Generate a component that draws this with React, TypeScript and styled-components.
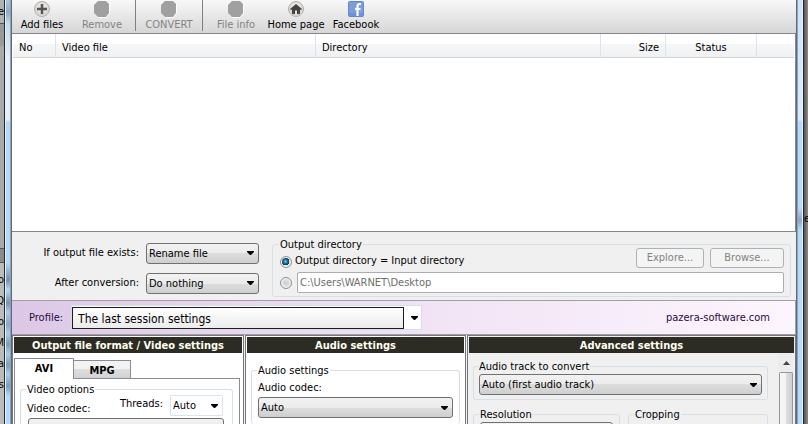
import React from "react";
import styled, { createGlobalStyle } from "styled-components";

const Global = createGlobalStyle`
  * { box-sizing: border-box; }
  body {
    margin: 0;
    overflow: hidden;
    background: #b4b4b4;
    color: #000;
    font: 11px/14px "DejaVu Sans Condensed", "Noto Sans", sans-serif;
  }
  button, input, select { font: inherit; color: inherit; margin: 0; border-radius: 0; }
`;

const Desktop = styled.div`
  display: grid;
  grid-template-columns: 4px 8px minmax(0, 1fr) 8px 4px;
  height: 100vh;
`;

const Backdrop = styled.div<{ $side: "left" | "right" }>`
  display: flex;
  flex-direction: column;
  overflow: hidden;
  align-items: ${(p) => (p.$side === "left" ? "flex-end" : "flex-start")};
  background: ${(p) =>
    p.$side === "left"
      ? "linear-gradient(#b2b2b2 0 23px, #555 23px 24px, #9a9a9a 24px 46px, #aaa 46px 248px, #555 248px 249px, #8a8a8a 249px 262px, #555 262px 263px, #bcbcbc 263px)"
      : "linear-gradient(90deg, #555, #8c8c8c)"};
`;

const Sliver = styled.span<{ $gap: number }>`
  flex: none;
  margin-top: ${(p) => p.$gap}px;
  white-space: nowrap;
`;

const Frame = styled.div<{ $side: "left" | "right" }>`
  border: solid #22272d;
  border-width: ${(p) => (p.$side === "left" ? "0 0 0 1px" : "0 1px 0 0")};
  box-shadow: inset ${(p) => (p.$side === "left" ? "-1px" : "1px")} 0 #5f6a75,
    inset ${(p) => (p.$side === "left" ? "-2px" : "2px")} 0 #93a3b3,
    inset ${(p) => (p.$side === "left" ? "1px" : "-1px")} 0 #e6f3fc;
  background: ${(p) =>
    p.$side === "left"
      ? "linear-gradient(#a9c5dd 0, #8cabc6 12px, #c5dbee 24px, #e4eff9 60px, #e4eff9 120px, #b5d8f8 122px, #b5d8f8 262px, #7893ac 280px, #b5d8f8 290px, #7893ac 303px, #a9cbe9 312px, #8aa9c4 324px, #a9cbe9 334px, #809cb6 344px, #a9cbe9 354px, #809cb6 365px, #a9cbe9 374px, #809cb6 386px, #b5d8f8 396px)"
      : "linear-gradient(#cbe3fb 0, #d9eafb 120px, #b5d8fb 122px, #b5d8fb 208px, #8aa5bf 220px, #b5d8fb 230px)"};
`;

const Window = styled.main`
  display: flex;
  flex-direction: column;
  min-width: 0;
  min-height: 0;
  overflow: hidden;
  background: #f0f0f0;
`;

const Toolbar = styled.nav`
  display: flex;
  flex: none;
  height: 34px;
  border-bottom: 1px solid #85858b;
  background: linear-gradient(#f8f8f8, #d6d6d6);
`;

const ToolButton = styled.button`
  display: flex;
  flex-direction: column;
  align-items: center;
  width: 60px;
  padding: 1px 0 0;
  border: 0;
  background: none;
  white-space: nowrap;
  &:disabled { color: #838383; }
  svg { display: block; flex: none; }
`;

const ToolDivider = styled.span`
  width: 1px;
  height: 31px;
  margin: 0 3px;
  background: #808080;
`;

const FileList = styled.section`
  flex: none;
  min-height: 198px;
  border-right: 1px solid #828790;
  border-bottom: 1px solid #828790;
  background: #fff;
  padding: 0 1px;
`;

const FileTable = styled.table`
  width: 100%;
  table-layout: fixed;
  border-collapse: separate;
  border-spacing: 0;
`;

const HeadCell = styled.th<{ $align?: string; $width?: number }>`
  width: ${(p) => (p.$width ? `${p.$width}px` : "auto")};
  height: 24px;
  padding: 4px 6px 0;
  border-right: 1px solid #e0e2e5;
  border-bottom: 1px solid #d5d5d5;
  background: linear-gradient(#fff 0 10px, #f6f7f9 10px, #f0f1f3);
  font-weight: normal;
  line-height: 15px;
  text-align: ${(p) => p.$align ?? "left"};
  &:last-child { border-right: 0; }
`;

const Options = styled.section`
  display: flex;
  flex: none;
  height: 68px;
  padding: 4px 5px 3px 0;
  gap: 13px;
`;

const OptionGrid = styled.div`
  display: grid;
  grid-template-columns: 127px 113px;
  grid-template-rows: 22px 22px;
  column-gap: 7px;
  row-gap: 8px;
  padding-top: 6px;
  align-items: center;
  & > label { text-align: right; }
`;

const Group = styled.fieldset`
  min-width: 0;
  margin: 0;
  padding: 0 6px;
  border: 1px solid #d5dfe5;
  border-radius: 3px;
`;

const Legend = styled.legend`
  margin-left: -1px;
  padding: 2px 1px 0;
  line-height: 14px;
`;

const DirectoryGroup = styled(Group)`
  flex: 1;
  padding: 0 6px 0 7px;
`;

const DirectoryRow = styled.div`
  display: flex;
  gap: 6px;
`;

const RadioRow = styled(DirectoryRow)`
  align-items: flex-end;
  height: 20px;
  margin-top: -4px;
`;

const PathRow = styled(DirectoryRow)`
  align-items: center;
  margin-top: 4px;
  gap: 5px;
`;

const Radio = styled.input`
  appearance: none;
  flex: none;
  width: 12px;
  height: 12px;
  margin: 0;
  border: 1px solid #8e8f8f;
  border-radius: 50%;
  background: radial-gradient(circle, #c8ccd0, #f8f8f8);
  box-shadow: inset 0 0 0 1px #f4f4f4;
  &:checked {
    background: radial-gradient(circle at 45% 45%, #6ed0f5 0, #1c6c98 2px, #0b2f4c 4px, #dfe5e8 4px);
  }
`;

const RadioLabel = styled.label`
  flex: 1;
  margin-left: -3px;
`;

const PushButton = styled.button<{ $width: number }>`
  width: ${(p) => p.$width}px;
  height: 20px;
  padding: 0;
  border: 1px solid #adb2b5;
  border-radius: 3px;
  background: #f4f4f4;
  color: #838383;
`;

const PathInput = styled.input`
  flex: 1;
  min-width: 0;
  height: 21px;
  padding: 0 2px;
  border: 1px solid #abadb3;
  border-radius: 2px;
  background: #fff;
  color: #6d6d6d;
`;

const SelectBox = styled.div<{ $flat?: boolean }>`
  display: grid;
  grid-template-columns: minmax(0, 1fr) 11px;
  align-items: center;
  height: 21px;
  border: 1px solid ${(p) => (p.$flat ? "#dce3ea" : "#707070")};
  border-radius: ${(p) => (p.$flat ? 1 : 3)}px;
  background: ${(p) => (p.$flat ? "#fff" : "linear-gradient(#f2f2f2 0, #ebebeb 50%, #dddddd 50%, #cfcfcf)")};
  svg { grid-area: 1 / 2; pointer-events: none; }
`;

const Select = styled.select`
  grid-area: 1 / 1 / 2 / 3;
  appearance: none;
  width: 100%;
  height: 19px;
  padding: 1px 11px 0 2px;
  border: 0;
  background: transparent;
`;

const ProfileBar = styled.section`
  display: flex;
  flex: none;
  align-items: center;
  height: 35px;
  padding: 0 25px 0 17px;
  border: solid #a0a0a0;
  border-width: 1px 1px 1px 0;
  background: linear-gradient(90deg, #dcc8e6, #f0e2f4 50%, #fdf5fe);
  color: #2b0a3d;
`;

const ProfileCombo = styled.div`
  display: grid;
  grid-template-columns: minmax(0, 1fr) 17px;
  align-items: center;
  width: 351px;
  height: 25px;
  margin: 0 auto 0 8px;
  border: 1px solid #dcdce4;
  background: #fff;
  svg { justify-self: end; margin-right: 3px; }
`;

const ProfileSelect = styled.select`
  appearance: none;
  align-self: end;
  height: 22px;
  padding: 2px 5px 0;
  border: 1px solid #1c1c1c;
  background: linear-gradient(#fff, #ebebeb);
  color: #000;
  font-size: 12px;
`;

const SiteLink = styled.a`
  color: #2b0a3d;
  text-decoration: none;
`;

const Panels = styled.div`
  display: grid;
  flex: 1;
  grid-template-columns: 232px 221px minmax(0, 1fr);
  gap: 1px;
  min-height: 0;
`;

const Panel = styled.section<{ $gray?: boolean }>`
  display: flex;
  flex-direction: column;
  min-width: 0;
  min-height: 0;
  border: solid #75757c;
  border-width: 1px 1px 0;
  background: ${(p) => (p.$gray ? "#f0f0f0" : "#fff")};
`;

const PanelTitle = styled.h2`
  flex: none;
  height: 16px;
  margin: 1px 1px 0;
  background: #2d2c24;
  color: #fffff0;
  font-size: 11px;
  line-height: 17px;
  text-align: center;
  white-space: nowrap;
`;

const Tabs = styled.div`
  display: flex;
  align-items: flex-end;
  height: 25px;
  padding-left: 1px;
`;

const Tab = styled.button<{ $active?: boolean }>`
  z-index: ${(p) => (p.$active ? 1 : 0)};
  width: ${(p) => (p.$active ? 60 : 57)}px;
  height: ${(p) => (p.$active ? 21 : 18)}px;
  margin-bottom: ${(p) => (p.$active ? -1 : 0)}px;
  padding: ${(p) => (p.$active ? 0 : 2)}px 0 0;
  border: 1px solid #898c95;
  border-bottom: 0;
  border-left-width: ${(p) => (p.$active ? 1 : 0)}px;
  background: ${(p) => (p.$active ? "#fff" : "linear-gradient(#f2f2f2 0 50%, #dedede 50%, #d2d2d2)")};
  font-weight: bold;
`;

const TabPage = styled.div`
  flex: 1;
  min-height: 0;
  margin: 0 3px 0 1px;
  padding: 2px 6px 0 5px;
  border: solid #898c95;
  border-width: 1px 1px 0;
`;

const TallGroup = styled(Group)`
  height: 100%;
  min-height: 60px;
  border-bottom: 0;
`;

const CodecRow = styled.div`
  display: grid;
  grid-template-columns: minmax(0, 1fr) auto 53px;
  column-gap: 7px;
  margin-top: -2px;
  padding: 0 3px 0 0;
  & > :first-child { padding-top: 7px; }
  & > :nth-child(2) { padding-top: 2px; }
`;

const CodecSelect = styled.div`
  margin-top: 2px;
  padding: 0 2px 0 1px;
`;

const AudioBody = styled.div`
  flex: 1;
  min-height: 0;
  padding: 9px 5px 0;
`;

const AudioField = styled.div`
  display: grid;
  gap: 2px;
  padding-top: 3px;
`;

const AdvancedBody = styled.div`
  display: grid;
  flex: 1;
  grid-template-columns: minmax(0, 1fr) 14px;
  column-gap: 11px;
  min-height: 0;
  padding: 0 2px 0 5px;
`;

const AdvancedContent = styled.div`
  min-width: 0;
  padding-top: 5px;
`;

const TrackGroup = styled(Group)`
  padding: 0 5px 4px;
`;

const SizeGroups = styled.div`
  display: grid;
  grid-template-columns: 147px minmax(0, 1fr);
  gap: 8px;
  margin-top: 6px;
`;

const SizeGroup = styled(Group)`
  height: 50px;
`;

const ScrollTrack = styled.div`
  display: flex;
  flex-direction: column;
  background: #ececec;
`;

const ScrollUp = styled.button`
  display: grid;
  place-items: center;
  height: 19px;
  padding: 0;
  border: 0;
  background: none;
`;

const ScrollThumb = styled.div`
  display: flex;
  flex: 1;
  align-items: flex-end;
  justify-content: center;
  min-height: 50px;
  border: solid #979797;
  border-width: 1px 1px 0;
  border-radius: 2px 2px 0 0;
  background: linear-gradient(90deg, #f5f5f5 0 45%, #dcdcdc 55%, #cfcfcf);
`;

const Grip = styled.span`
  width: 7px;
  height: 2px;
  background: #666;
`;

const Arrow = () => (
  <svg width="7" height="4" viewBox="0 0 7 4" aria-hidden="true">
    <path d="M0 0h7v1L4 4H3L0 1z" fill="#000" />
  </svg>
);

const DisabledIcon = () => (
  <svg width="18" height="17" viewBox="0 0 18 17" aria-hidden="true">
    <path d="M6 1h8l3 3v8l-4 5H6l-4-4V5z" fill="#fff" />
    <path d="M5 0h8l3 3v9l-3 4H5l-4-4V4z" fill="#a0a0a0" />
  </svg>
);

const RoundBase = () => (
  <>
    <circle cx="9" cy="8" r="7.5" fill="#d9d7d3" stroke="#b5b2ad" />
    <circle cx="9" cy="7" r="5.5" fill="#e6e4e1" />
  </>
);

const AddIcon = () => (
  <svg width="18" height="17" viewBox="0 0 18 17" aria-hidden="true">
    <RoundBase />
    <path d="M9 3v10M4 8h10" stroke="#555" strokeWidth="2.5" />
  </svg>
);

const HomeIcon = () => (
  <svg width="18" height="17" viewBox="0 0 18 17" aria-hidden="true">
    <RoundBase />
    <path d="M9 3l6 5-1 1-1-.5V13h-3V9.500H8V13H5V8.500L4 9 3 8z" fill="#444" />
  </svg>
);

const FacebookIcon = () => (
  <svg width="18" height="17" viewBox="0 0 18 17" aria-hidden="true">
    <rect x="1.500" y="0.500" width="15" height="15" rx="1" fill="#7e9edb" stroke="#6686c8" />
    <path d="M2 12h14v3H2z" fill="#6b91d8" />
    <path d="M14 3h-1.500Q10.500 3 10.500 5.500V15M8 8h5.500" fill="none" stroke="#fff" strokeWidth="2.200" />
  </svg>
);

function Choice({ id, value, flat }: { id: string; value: string; flat?: boolean }) {
  return (
    <SelectBox $flat={flat}>
      <Select id={id} aria-label={id}>
        <option>{value}</option>
      </Select>
      <Arrow />
    </SelectBox>
  );
}

export default function App() {
  return (
    <>
      <Global />
      <Desktop>
        <Backdrop $side="left" aria-hidden="true">
          <Sliver $gap={5}>ze</Sliver>
          <Sliver $gap={254}>to</Sliver>
          <Sliver $gap={7}>Q</Sliver>
          <Sliver $gap={7}>lo</Sliver>
          <Sliver $gap={7}>M</Sliver>
          <Sliver $gap={7}>ia</Sliver>
          <Sliver $gap={7}>as</Sliver>
        </Backdrop>
        <Frame $side="left" />
        <Window>
          <Toolbar aria-label="Main toolbar">
            <ToolButton><AddIcon />Add files</ToolButton>
            <ToolButton disabled><DisabledIcon />Remove</ToolButton>
            <ToolDivider />
            <ToolButton disabled><DisabledIcon />CONVERT</ToolButton>
            <ToolDivider />
            <ToolButton disabled><DisabledIcon />File info</ToolButton>
            <ToolButton><HomeIcon />Home page</ToolButton>
            <ToolButton><FacebookIcon />Facebook</ToolButton>
          </Toolbar>

          <FileList>
            <FileTable>
              <thead>
                <tr>
                  <HeadCell $width={43}>No</HeadCell>
                  <HeadCell $width={260}>Video file</HeadCell>
                  <HeadCell>Directory</HeadCell>
                  <HeadCell $width={65} $align="right">Size</HeadCell>
                  <HeadCell $width={91} $align="center">Status</HeadCell>
                  <HeadCell $width={37} />
                </tr>
              </thead>
            </FileTable>
          </FileList>

          <Options>
            <OptionGrid>
              <label htmlFor="exists">If output file exists:</label>
              <Choice id="exists" value="Rename file" />
              <label htmlFor="after">After conversion:</label>
              <Choice id="after" value="Do nothing" />
            </OptionGrid>
            <DirectoryGroup>
              <Legend>Output directory</Legend>
              <RadioRow>
                <Radio type="radio" name="dir" id="same" defaultChecked />
                <RadioLabel htmlFor="same">Output directory = Input directory</RadioLabel>
                <PushButton $width={68} disabled>Explore...</PushButton>
                <PushButton $width={74} disabled>Browse...</PushButton>
              </RadioRow>
              <PathRow>
                <Radio type="radio" name="dir" aria-label="Custom directory" />
                <PathInput aria-label="Directory path" disabled defaultValue="C:\Users\WARNET\Desktop" />
              </PathRow>
            </DirectoryGroup>
          </Options>

          <ProfileBar>
            <label htmlFor="profile">Profile:</label>
            <ProfileCombo>
              <ProfileSelect id="profile">
                <option>The last session settings</option>
              </ProfileSelect>
              <Arrow />
            </ProfileCombo>
            <SiteLink href="#site">pazera-software.com</SiteLink>
          </ProfileBar>

          <Panels>
            <Panel>
              <PanelTitle>Output file format / Video settings</PanelTitle>
              <Tabs role="tablist">
                <Tab role="tab" $active>AVI</Tab>
                <Tab role="tab">MPG</Tab>
              </Tabs>
              <TabPage>
                <TallGroup>
                  <Legend>Video options</Legend>
                  <CodecRow>
                    <label htmlFor="video-codec">Video codec:</label>
                    <label htmlFor="threads">Threads:</label>
                    <Choice id="threads" value="Auto" flat />
                  </CodecRow>
                  <CodecSelect>
                    <Choice id="video-codec" value="" />
                  </CodecSelect>
                </TallGroup>
              </TabPage>
            </Panel>

            <Panel>
              <PanelTitle>Audio settings</PanelTitle>
              <AudioBody>
                <TallGroup>
                  <Legend>Audio settings</Legend>
                  <AudioField>
                    <label htmlFor="audio-codec">Audio codec:</label>
                    <Choice id="audio-codec" value="Auto" />
                  </AudioField>
                </TallGroup>
              </AudioBody>
            </Panel>

            <Panel $gray>
              <PanelTitle>Advanced settings</PanelTitle>
              <AdvancedBody>
                <AdvancedContent>
                  <TrackGroup>
                    <Legend>Audio track to convert</Legend>
                    <Choice id="track" value="Auto (first audio track)" />
                  </TrackGroup>
                  <SizeGroups>
                    <SizeGroup>
                      <Legend>Resolution</Legend>
                      <Choice id="resolution" value="" />
                    </SizeGroup>
                    <SizeGroup>
                      <Legend>Cropping</Legend>
                    </SizeGroup>
                  </SizeGroups>
                </AdvancedContent>
                <ScrollTrack>
                  <ScrollUp aria-label="Scroll up">
                    <svg width="7" height="4" viewBox="0 0 7 4" aria-hidden="true">
                      <path d="M0 4L3.5 0 7 4z" fill="#444" />
                    </svg>
                  </ScrollUp>
                  <ScrollThumb><Grip /></ScrollThumb>
                </ScrollTrack>
              </AdvancedBody>
            </Panel>
          </Panels>
        </Window>
        <Frame $side="right" />
        <Backdrop $side="right" aria-hidden="true">
          <Sliver $gap={212}>ev</Sliver>
        </Backdrop>
      </Desktop>
    </>
  );
}
